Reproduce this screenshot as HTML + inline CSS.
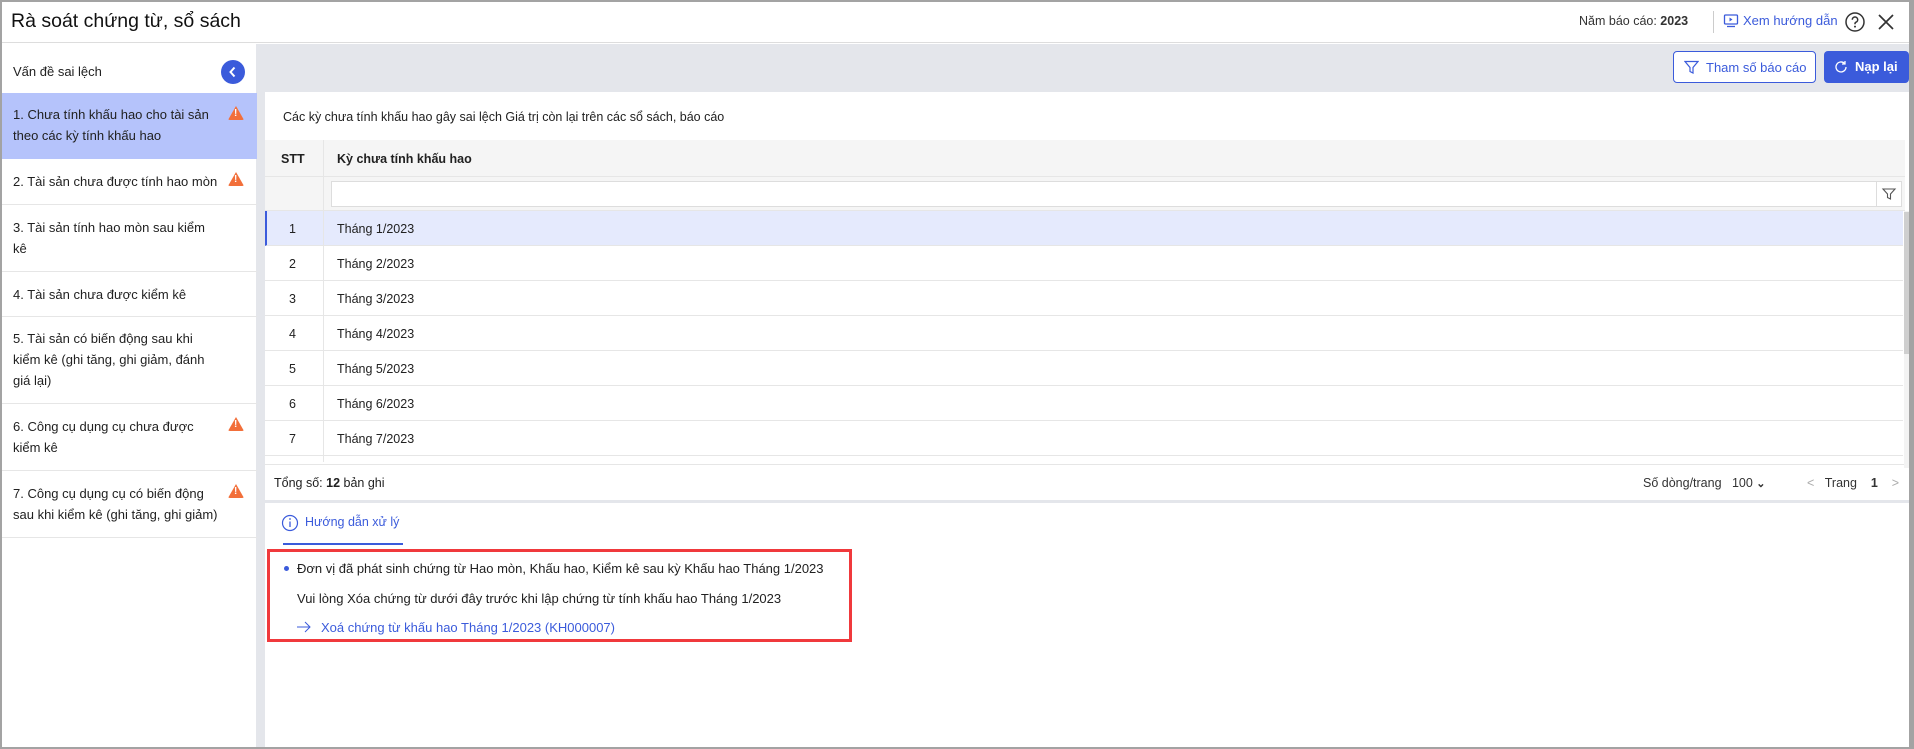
<!DOCTYPE html>
<html><head><meta charset="utf-8"><style>
*{box-sizing:border-box;margin:0;padding:0}
body{width:1914px;height:749px;overflow:hidden;font-family:"Liberation Sans",Arial,sans-serif;color:#212121;font-size:13.5px;background:#a3a3a3;position:relative}
.abs{position:absolute}
#win{position:absolute;left:2px;top:2px;width:1907px;height:745px;background:#fff;overflow:hidden}
.w{width:0;height:0;border-left:8px solid transparent;border-right:8px solid transparent;border-bottom:14px solid #f26f3a;border-radius:2px}
.w::after{content:"!";position:absolute;left:-2px;top:2px;color:#fff;font-size:10px;font-weight:bold;line-height:12px}
</style></head><body>
<div id="win">
 <div class="abs" style="left:0;top:0;width:1907px;height:41px;border-bottom:1px solid #ddd;background:#fff">
  <div class="abs" style="left:9px;top:8px;font-size:19.5px;color:#111">Rà soát chứng từ, sổ sách</div>
  <div class="abs" style="left:1577px;top:12px;font-size:12.5px;color:#333">Năm báo cáo: <b>2023</b></div>
  <div class="abs" style="left:1711px;top:9px;width:1px;height:22px;background:#ccc"></div>
  <svg class="abs" style="left:1721px;top:11px" width="16" height="16" viewBox="0 0 16 16"><rect x="1.5" y="2" width="13" height="9" rx="1" fill="none" stroke="#3b5bdb" stroke-width="1.3"/><path d="M6.5 4.5v4l3-2z" fill="#3b5bdb"/><path d="M4 13.5h8" stroke="#3b5bdb" stroke-width="1.3"/></svg>
  <div class="abs" style="left:1741px;top:11px;font-size:13px;color:#3b5bdb">Xem hướng dẫn</div>
  <svg class="abs" style="left:1842px;top:9px" width="22" height="22" viewBox="0 0 22 22"><circle cx="11" cy="11" r="9" fill="none" stroke="#333" stroke-width="1.5"/><path d="M8.3 8.7a2.7 2.7 0 1 1 3.7 2.5c-.7.3-1 .8-1 1.5v.6" fill="none" stroke="#333" stroke-width="1.5"/><circle cx="11" cy="15.6" r="1" fill="#333"/></svg>
  <svg class="abs" style="left:1875px;top:11px" width="18" height="18" viewBox="0 0 18 18"><path d="M2 2l14 14M16 2L2 16" stroke="#333" stroke-width="1.7"/></svg>
 </div>
 <div class="abs" style="left:0;top:42px;width:255px;height:703px;background:#fff;border-right:1px solid #e4e6eb">
  <div class="abs" style="left:11px;top:20px;font-size:13px">Vấn đề sai lệch</div>
  <div class="abs" style="left:219px;top:16px;width:24px;height:24px;border-radius:50%;background:#3b5bdb"><svg width="24" height="24" viewBox="0 0 24 24"><path d="M13.5 7.5L9.5 12l4 4.5" fill="none" stroke="#fff" stroke-width="2"/></svg></div>
 </div>
 <div class="abs" style="left:0;top:91px;width:255px;font-size:13px;line-height:21px">
  <div style="height:66px;background:#b5c3fb;padding:11px 40px 0 11px;position:relative">1. Chưa tính khấu hao cho tài sản theo các kỳ tính khấu hao<span class="w" style="position:absolute;left:226px;top:13px"></span></div>
  <div style="height:46px;border-bottom:1px solid #e6e6e6;padding:12px 11px 0;position:relative">2. Tài sản chưa được tính hao mòn<span class="w" style="position:absolute;left:226px;top:13px"></span></div>
  <div style="height:67px;border-bottom:1px solid #e6e6e6;padding:12px 40px 0 11px">3. Tài sản tính hao mòn sau kiểm kê</div>
  <div style="height:45px;border-bottom:1px solid #e6e6e6;padding:12px 11px 0">4. Tài sản chưa được kiểm kê</div>
  <div style="height:87px;border-bottom:1px solid #e6e6e6;padding:11px 40px 0 11px">5. Tài sản có biến động sau khi kiểm kê (ghi tăng, ghi giảm, đánh giá lại)</div>
  <div style="height:67px;border-bottom:1px solid #e6e6e6;padding:12px 45px 0 11px;position:relative">6. Công cụ dụng cụ chưa được kiểm kê<span class="w" style="position:absolute;left:226px;top:13px"></span></div>
  <div style="height:67px;border-bottom:1px solid #e6e6e6;padding:12px 36px 0 11px;position:relative">7. Công cụ dụng cụ có biến động sau khi kiểm kê (ghi tăng, ghi giảm)<span class="w" style="position:absolute;left:226px;top:13px"></span></div>
 </div>
 <div class="abs" style="left:255px;top:42px;width:1652px;height:703px;background:#e4e6eb"></div>
 <div class="abs" style="left:1671px;top:49px;width:143px;height:32px;border:1px solid #3b5bdb;border-radius:4px;background:#fff;color:#3b5bdb;font-size:13px">
  <svg class="abs" style="left:10px;top:8px" width="15" height="15" viewBox="0 0 15 15"><path d="M1 1.5h13L9 7.5v5.5l-3-1.5v-4z" fill="none" stroke="#3b5bdb" stroke-width="1.2"/></svg>
  <span class="abs" style="left:32px;top:8px">Tham số báo cáo</span></div>
 <div class="abs" style="left:1822px;top:49px;width:85px;height:32px;border-radius:4px;background:#3b5bdb;color:#fff;font-size:13px;font-weight:bold">
  <svg class="abs" style="left:10px;top:9px" width="14" height="14" viewBox="0 0 14 14"><path d="M12 7a5 5 0 1 1-1.5-3.6" fill="none" stroke="#fff" stroke-width="1.3"/><path d="M11 1v3h-3" fill="none" stroke="#fff" stroke-width="1.3"/></svg>
  <span class="abs" style="left:31px;top:8px">Nạp lại</span></div>
 <div class="abs" style="left:263px;top:90px;width:1644px;height:408px;background:#fff">
  <div class="abs" style="left:18px;top:18px;font-size:12.5px">Các kỳ chưa tính khấu hao gây sai lệch Giá trị còn lại trên các sổ sách, báo cáo</div>
  <div class="abs" style="left:0;top:48px;width:1640px;height:37px;background:#f5f5f5;border-bottom:1px solid #e6e6e6;font-weight:bold;font-size:12.5px">
   <span class="abs" style="left:16px;top:12px">STT</span><div class="abs" style="left:58px;top:0;width:1px;height:37px;background:#e6e6e6"></div><span class="abs" style="left:72px;top:12px">Kỳ chưa tính khấu hao</span></div>
  <div class="abs" style="left:0;top:85px;width:1640px;height:34px;background:#f5f5f5;border-bottom:1px solid #e6e6e6">
   <div class="abs" style="left:58px;top:0;width:1px;height:34px;background:#e6e6e6"></div>
   <div class="abs" style="left:66px;top:4px;width:1546px;height:26px;border:1px solid #ddd;background:#fff"></div>
   <div class="abs" style="left:1611px;top:4px;width:26px;height:26px;border:1px solid #ddd;background:#fff"><svg width="24" height="24" viewBox="0 0 24 24"><path d="M6 7h12l-4.5 5v5l-3-1.5V12z" fill="none" stroke="#555" stroke-width="1.1"/></svg></div>
  </div>
  <div class="abs" style="left:0;top:119px;width:1638px;font-size:12.5px">
   <div style="height:35px;background:#e5eafd;border-left:2px solid #3b5bdb;border-bottom:1px solid #e6e6e6;position:relative"><span class="abs" style="left:22px;top:11px">1</span><div class="abs" style="left:56px;top:0;width:1px;height:35px;background:#e6e6e6"></div><span class="abs" style="left:70px;top:11px">Tháng 1/2023</span></div>
   <div style="height:35px;border-bottom:1px solid #e6e6e6;position:relative"><span class="abs" style="left:24px;top:11px">2</span><div class="abs" style="left:58px;top:0;width:1px;height:35px;background:#e6e6e6"></div><span class="abs" style="left:72px;top:11px">Tháng 2/2023</span></div>
   <div style="height:35px;border-bottom:1px solid #e6e6e6;position:relative"><span class="abs" style="left:24px;top:11px">3</span><div class="abs" style="left:58px;top:0;width:1px;height:35px;background:#e6e6e6"></div><span class="abs" style="left:72px;top:11px">Tháng 3/2023</span></div>
   <div style="height:35px;border-bottom:1px solid #e6e6e6;position:relative"><span class="abs" style="left:24px;top:11px">4</span><div class="abs" style="left:58px;top:0;width:1px;height:35px;background:#e6e6e6"></div><span class="abs" style="left:72px;top:11px">Tháng 4/2023</span></div>
   <div style="height:35px;border-bottom:1px solid #e6e6e6;position:relative"><span class="abs" style="left:24px;top:11px">5</span><div class="abs" style="left:58px;top:0;width:1px;height:35px;background:#e6e6e6"></div><span class="abs" style="left:72px;top:11px">Tháng 5/2023</span></div>
   <div style="height:35px;border-bottom:1px solid #e6e6e6;position:relative"><span class="abs" style="left:24px;top:11px">6</span><div class="abs" style="left:58px;top:0;width:1px;height:35px;background:#e6e6e6"></div><span class="abs" style="left:72px;top:11px">Tháng 6/2023</span></div>
   <div style="height:35px;border-bottom:1px solid #e6e6e6;position:relative"><span class="abs" style="left:24px;top:11px">7</span><div class="abs" style="left:58px;top:0;width:1px;height:35px;background:#e6e6e6"></div><span class="abs" style="left:72px;top:11px">Tháng 7/2023</span></div>
   <div style="height:6px;position:relative"><div class="abs" style="left:58px;top:0;width:1px;height:6px;background:#e6e6e6"></div></div>
  </div>
  <div class="abs" style="left:0;top:372px;width:1644px;height:1px;background:#e6e6e6"></div>
  <div class="abs" style="left:1639px;top:119px;width:7px;height:257px;background:#f3f3f3"></div>
  <div class="abs" style="left:1639px;top:120px;width:7px;height:142px;background:#cfcfcf"></div>
  <div class="abs" style="left:9px;top:384px;font-size:12.5px">Tổng số: <b>12</b> bản ghi</div>
  <div class="abs" style="left:1378px;top:384px;font-size:12.5px;color:#333">Số dòng/trang&nbsp;&nbsp;&nbsp;100 <b style="font-size:11px">&#8964;</b></div>
  <div class="abs" style="left:1542px;top:384px;font-size:12.5px;color:#333"><span style="color:#aaa">&lt;</span>&nbsp;&nbsp;&nbsp;Trang&nbsp;&nbsp;&nbsp;&nbsp;<b>1</b>&nbsp;&nbsp;&nbsp;&nbsp;<span style="color:#aaa">&gt;</span></div>
 </div>
 <div class="abs" style="left:263px;top:501px;width:1644px;height:244px;background:#fff">
  <svg class="abs" style="left:16px;top:11px" width="18" height="18" viewBox="0 0 18 18"><circle cx="9" cy="9" r="7.5" fill="none" stroke="#3b5bdb" stroke-width="1.2"/><path d="M9 7.5v5.5" stroke="#3b5bdb" stroke-width="1.3"/><circle cx="9" cy="5" r=".9" fill="#3b5bdb"/></svg>
  <div class="abs" style="left:40px;top:12px;font-size:12.5px;color:#3b5bdb">Hướng dẫn xử lý</div>
  <div class="abs" style="left:18px;top:40px;width:120px;height:2px;background:#3b5bdb"></div>
  <div class="abs" style="left:2px;top:46px;width:585px;height:93px;border:3px solid #f0393c"></div>
  <div class="abs" style="left:19px;top:63px;width:5px;height:5px;border-radius:50%;background:#3b5bdb"></div>
  <div class="abs" style="left:32px;top:58px;font-size:13px">Đơn vị đã phát sinh chứng từ Hao mòn, Khấu hao, Kiểm kê sau kỳ Khấu hao Tháng 1/2023</div>
  <div class="abs" style="left:32px;top:88px;font-size:13px">Vui lòng Xóa chứng từ dưới đây trước khi lập chứng từ tính khấu hao Tháng 1/2023</div>
  <svg class="abs" style="left:32px;top:118px" width="14" height="12" viewBox="0 0 14 12"><path d="M0 6h13M8 1l5 5-5 5" fill="none" stroke="#3b5bdb" stroke-width="1"/></svg>
  <div class="abs" style="left:56px;top:117px;font-size:13px;color:#3b5bdb">Xoá chứng từ khấu hao Tháng 1/2023 (KH000007)</div>
 </div>
</div>
</body></html>
